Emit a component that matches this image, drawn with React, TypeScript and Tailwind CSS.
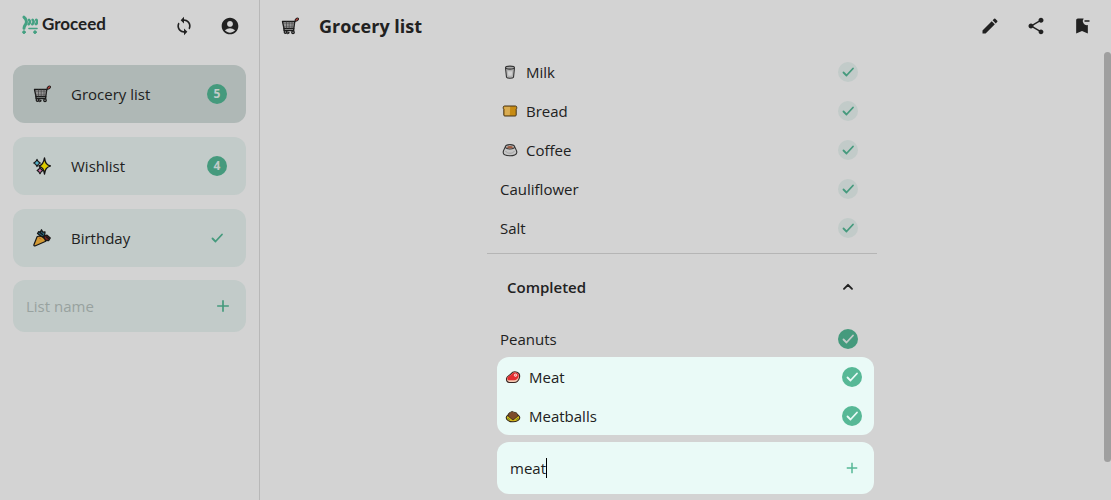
import { useState } from 'react';
import type { ReactNode } from 'react';
import {
  MdAccountCircle,
  MdAdd,
  MdBookmarkRemove,
  MdEdit,
  MdShare,
  MdSync,
} from 'react-icons/md';

function Logo() {
  return (
    <svg viewBox="0 0 48 56" className="h-[19px] w-4" fill="none" stroke="#45a183" strokeLinecap="round" strokeLinejoin="round">
      <path d="M6 6c7 5 8 10 7 16-1 7-7 10-7 17" strokeWidth="9" />
      <path d="M21 14c4 4 4 9-1 13M32 14c4 4 4 9-1 13M43 14c3 4 3 9-1 13" strokeWidth="8" />
      <path d="M21 40h24" strokeWidth="5" />
      <circle cx="6" cy="51" r="4" fill="#45a183" strokeWidth="3" />
      <circle cx="39" cy="51" r="4" fill="#45a183" strokeWidth="3" />
    </svg>
  );
}

function CheckIcon() {
  return (
    <svg viewBox="0 0 16 16" className="size-4" fill="none" stroke="currentColor" strokeWidth="1.800" strokeLinecap="round" strokeLinejoin="round">
      <path d="m3.500 8.500 3 3 6.500-7" />
    </svg>
  );
}

function ChevronUpIcon() {
  return (
    <svg viewBox="0 0 18 18" className="size-[18px]" fill="none" stroke="currentColor" strokeWidth="1.900" strokeLinecap="round" strokeLinejoin="round">
      <path d="m5 10.800 4-4 4 4" />
    </svg>
  );
}

function CartIcon() {
  return (
    <svg viewBox="0 0 18 18" className="size-[18px]" fill="none" stroke="#1b1b1b" strokeLinecap="round" strokeLinejoin="round">
      <path d="M1.500 4.500h12.300l-1 7H3z" fill="#aaa" strokeWidth="1.300" />
      <path d="M2.500 6.800h10.700M3 9.200h10M5.500 5v6M8.200 5v6M11 5v6" stroke="#444" strokeWidth=".7" />
      <path d="m13.800 4.500 1.700-1.700M3 11.500v2h9.700v-2" strokeWidth="1.400" />
      <path d="m15.300 3 1.200-1" strokeWidth="3" />
      <path d="m15.300 3 1.200-1" stroke="#b0443c" strokeWidth="1.600" />
      <circle cx="4.500" cy="15" r="1.300" fill="#999" strokeWidth="1.200" />
      <circle cx="6.900" cy="15.800" r="1" fill="#999" strokeWidth="1" />
      <circle cx="12" cy="15.300" r="1.300" fill="#999" strokeWidth="1.200" />
    </svg>
  );
}

function SparklesIcon() {
  return (
    <svg viewBox="0 0 18 18" className="size-[18px]" stroke="#141414" strokeLinejoin="round">
      <path d="M4 2.300c.7 2.200 1.200 2.900 3.300 3.700C5.200 6.800 4.700 7.500 4 9.700 3.300 7.500 2.800 6.800.7 6c2.100-.8 2.600-1.500 3.300-3.700z" fill="#54b0c8" strokeWidth="1.100" />
      <path d="M7 10c.6 2 1.100 2.700 2.900 3.400-1.800.7-2.300 1.400-2.900 3.400-.6-2-1.100-2.700-2.900-3.400C5.900 12.700 6.400 12 7 10z" fill="#c8709f" strokeWidth="1.100" />
      <path d="M11.500.8c.8 5 1.900 7.200 6 8.200-4.100 1.200-5.200 3.200-6 8.200-.8-5-1.900-7-5.700-8.200 3.800-1 4.900-3.200 5.700-8.200z" fill="#dccb00" strokeWidth="1.300" />
    </svg>
  );
}

function PartyIcon() {
  return (
    <svg viewBox="0 0 18 18" className="size-[18px]" stroke="#171717" strokeLinejoin="round" strokeLinecap="round">
      <path d="m4.500 4.500 1.200-1.800 1.600.5L8.500.8l1.300 2.400L12 3l-.4 3.500L9 8z" fill="#28667f" strokeWidth="1.300" />
      <path d="m10.500 7.500 3.500-1.300 3.200 2.800-1.500 2.500-3.700-.2z" fill="#77201f" strokeWidth="1.400" />
      <path d="M4.200 7.500 1 15.500c-.5 1.200.4 1.700 1.500 1.300l10.300-4.600C11.500 9 8.500 6.500 4.200 7.500z" fill="#d39a34" strokeWidth="1.200" />
      <path d="m7 3.500 2.500 2M13.500 8l2 1.500" strokeWidth="1.300" />
      <path d="m6.500 9 1 1" stroke="#b04b23" />
    </svg>
  );
}

function MilkIcon() {
  return (
    <svg viewBox="0 0 16 16" className="size-4" fill="none" stroke="#333" strokeLinejoin="round">
      <path d="m3.500 4 1 9.300c.8 1.300 6.200 1.300 7 0l1-9.300" fill="#b5b5b5" strokeWidth="1.100" />
      <ellipse cx="8" cy="3.600" rx="4.500" ry="1.500" fill="#a9a9a9" strokeWidth="1.100" />
      <path d="M5.300 7h5.400l-.6 5H6z" fill="#d2d2d2" stroke="#aaa" strokeWidth=".5" />
    </svg>
  );
}

function BreadIcon() {
  return (
    <svg viewBox="0 0 16 16" className="size-4" strokeLinejoin="round">
      <path d="M2.500 3h11q1.300 0 1.300 1.700 0 1-.6 1.500V12q0 1-1 1H2.800q-1 0-1-1V6.200q-.6-.5-.6-1.500Q1.200 3 2.500 3z" fill="#c78b13" />
      <path d="M3 3.500h5.200l-.4 9H2.500v-6L2 4.500z" fill="#d9ac52" />
      <path d="M2.500 3h11q1.300 0 1.300 1.700 0 1-.6 1.500V12q0 1-1 1H2.800q-1 0-1-1V6.200q-.6-.5-.6-1.500Q1.200 3 2.500 3z" fill="none" stroke="#46351a" strokeWidth="1" />
    </svg>
  );
}

function CoffeeIcon() {
  return (
    <svg viewBox="0 0 16 16" className="size-4" stroke="#333" strokeLinejoin="round">
      <path d="M3.500 4.500C2.800 6.500 1.200 8 1.200 10.500c0 4.300 13.600 4.300 13.600 0 0-2.500-1.600-4-2.300-6z" fill="#c6c6c6" strokeWidth="1.100" />
      <path d="M3.500 9c1.500 3 7.500 3 9 0" fill="none" stroke="#999" strokeWidth=".8" />
      <ellipse cx="8" cy="4.800" rx="4.500" ry="2.200" fill="#c6c6c6" strokeWidth="1.100" />
      <ellipse cx="8" cy="5.300" rx="3" ry="1.200" fill="#9c5b42" stroke="none" />
    </svg>
  );
}

function MeatIcon() {
  return (
    <svg viewBox="0 0 16 16" className="size-4" strokeLinejoin="round">
      <path d="M1.500 9.800c0-3 3-2.800 4.500-5C7.500 2.800 10 2.500 12 3.200c2.200.8 3 3.500 2.300 6-.6 2.200-2.300 4.300-5.300 4.300H4.300c-2 0-2.900-1.600-2.800-3.700z" fill="#f3c9b2" stroke="#392422" strokeWidth="1.100" />
      <path d="M2.300 9.200c0-2 3-2.200 4.500-4.200 1.300-1.500 3.200-1.700 4.700-1.200 2 .8 2.500 2.600 1.900 4.300-.7 2-2 3.100-4.400 3.200H4.200c-1.300 0-1.900-.9-1.900-2.100z" fill="#e32d31" />
      <circle cx="10.500" cy="6.200" r="1.200" fill="#ed7b73" stroke="#fff" strokeWidth=".7" />
    </svg>
  );
}

function MeatballsIcon() {
  return (
    <svg viewBox="0 0 16 16" className="size-4" stroke="#34291d" strokeLinejoin="round">
      <ellipse cx="8" cy="9.800" rx="6.800" ry="4" fill="#d8b81a" strokeWidth="1.100" />
      <path d="M3.500 8.500C2.600 6.500 3.500 4.700 5.300 4.400 6.500 3 8.500 3.300 9 4.400c2.500-.5 4.500 2 3.500 4.100L8 12z" fill="#7c4b2b" strokeWidth=".8" />
      <path d="M2.800 10 4.500 12M13.200 10 11.500 12" stroke="#5b8a26" />
    </svg>
  );
}

interface Item {
  name: string;
  icon?: ReactNode;
}

const lists = [
  { name: 'Grocery list', icon: <CartIcon />, left: 5 },
  { name: 'Wishlist', icon: <SparklesIcon />, left: 4 },
  { name: 'Birthday', icon: <PartyIcon />, left: 0 },
];

const items: Item[] = [
  { name: 'Milk', icon: <MilkIcon /> },
  { name: 'Bread', icon: <BreadIcon /> },
  { name: 'Coffee', icon: <CoffeeIcon /> },
  { name: 'Cauliflower' },
  { name: 'Salt' },
];

const suggestions: Item[] = [
  { name: 'Meat', icon: <MeatIcon /> },
  { name: 'Meatballs', icon: <MeatballsIcon /> },
];

function ItemRow({ item, tone, className }: { item: Item; tone: string; className: string }) {
  return (
    <li className={`flex h-[39px] items-center gap-2 ${className}`}>
      {item.icon}
      <span className="flex-1">{item.name}</span>
      <button aria-label={`Toggle ${item.name}`} className={`grid size-5 place-items-center rounded-full ${tone}`}>
        <CheckIcon />
      </button>
    </li>
  );
}

function Sidebar() {
  const [selected, setSelected] = useState('Grocery list');

  return (
    <aside className="w-[260px] shrink-0 border-r border-[#b8b8b8] px-[13px]">
      <header className="flex h-[65px] items-start justify-between pt-3 pr-[6px] pl-[9px]">
        <a href="#" className="flex h-6 items-center gap-1 font-['Lato',sans-serif] text-[17px] font-bold">
          <Logo />
          Groceed
        </a>
        <div className="flex gap-[26px] pt-1">
          <button aria-label="Sync"><MdSync className="size-5" /></button>
          <button aria-label="Account"><MdAccountCircle className="size-5" /></button>
        </div>
      </header>

      <nav className="flex flex-col gap-[14px]">
        {lists.map((list) => (
          <button
            key={list.name}
            onClick={() => setSelected(list.name)}
            className={`flex h-[58px] items-center rounded-xl pr-[19px] pl-5 text-left ${
              selected === list.name ? 'bg-[#afb8b6]' : 'bg-[#c2cbc9]'
            }`}
          >
            {list.icon}
            <span className="flex-1 pl-5">{list.name}</span>
            {list.left > 0 ? (
              <span className="grid size-5 place-items-center rounded-full bg-[#459a7d] text-xs font-bold text-[#c2cbc9]">
                {list.left}
              </span>
            ) : (
              <span className="grid size-5 place-items-center text-[#459a7d]">
                <CheckIcon />
              </span>
            )}
          </button>
        ))}
      </nav>

      <form className="mt-[13px] flex h-[52px] items-center rounded-xl bg-[#c2cbc9] px-[13px]">
        <input
          aria-label="List name"
          placeholder="List name"
          className="min-w-0 flex-1 bg-transparent font-normal outline-none placeholder:text-[#98a29f]"
        />
        <button type="button" aria-label="Add list" className="text-[#459a7d]"><MdAdd className="size-5" /></button>
      </form>
    </aside>
  );
}

function AddItem() {
  const [text, setText] = useState('meat');

  return (
    <div className="absolute inset-x-0 bottom-[6px] mx-auto flex w-[377px] max-w-full flex-col gap-[7px]">
      <ul className="rounded-xl bg-[#eafaf7]">
        {suggestions.map((item) => (
          <ItemRow key={item.name} item={item} tone="bg-[#57b896] text-[#eafaf7]" className="pr-3 pl-2" />
        ))}
      </ul>
      <form className="flex h-[52px] items-center rounded-xl bg-[#eafaf7] px-[13px]">
        <div className="relative min-w-0 flex-1 font-normal">
          <input
            aria-label="Add item"
            value={text}
            onChange={(e) => setText(e.target.value)}
            className="w-full bg-transparent caret-transparent outline-none"
          />
          <div aria-hidden="true" className="pointer-events-none absolute inset-0 flex items-center">
            <span className="w-max whitespace-pre text-transparent select-none">{text}</span>
            <span className="h-5 w-px bg-black" />
          </div>
        </div>
        <button type="button" aria-label="Add" className="text-[#57b896]"><MdAdd className="size-[18px]" /></button>
      </form>
    </div>
  );
}

export default function App() {
  const [open, setOpen] = useState(true);

  return (
    <div className="flex min-h-screen bg-[#d3d3d3] font-['Open_Sans','Noto_Sans',sans-serif] text-[15px] leading-5 font-medium text-[#212121]">
      <Sidebar />

      <main className="relative flex min-w-0 flex-1 flex-col">
        <header className="flex h-[52px] items-center pr-[19px] pl-[21px]">
          <CartIcon />
          <h1 className="flex-1 pl-5 text-lg font-bold">Grocery list</h1>
          <div className="flex gap-[26px]">
            <button aria-label="Edit list"><MdEdit className="size-5" /></button>
            <button aria-label="Share list"><MdShare className="size-5" /></button>
            <button aria-label="Remove list"><MdBookmarkRemove className="size-5" /></button>
          </div>
        </header>

        <div className="flex flex-1">
          <section className="mx-auto w-[390px]">
            <ul className="border-b border-[#b5b5b5] pb-[6px]">
              {items.map((item) => (
                <ItemRow
                  key={item.name}
                  item={item}
                  tone="bg-[#c2cbc9] text-[#459a7d]"
                  className={item.icon ? 'pr-[19px] pl-[15px]' : 'pr-[19px] pl-[13px]'}
                />
              ))}
            </ul>
            <button
              aria-expanded={open}
              onClick={() => setOpen(!open)}
              className="flex h-[65px] w-full items-center justify-between pr-5 pl-5 font-semibold"
            >
              Completed
              <ChevronUpIcon />
            </button>
            {open && (
              <ul>
                <ItemRow item={{ name: 'Peanuts' }} tone="bg-[#459a7d] text-[#c2cbc9]" className="pr-[19px] pl-[13px]" />
              </ul>
            )}
          </section>
          <div className="h-[410px] w-[7px] rounded-full bg-[#9f9f9f]" />
        </div>

        <AddItem />
      </main>
    </div>
  );
}
